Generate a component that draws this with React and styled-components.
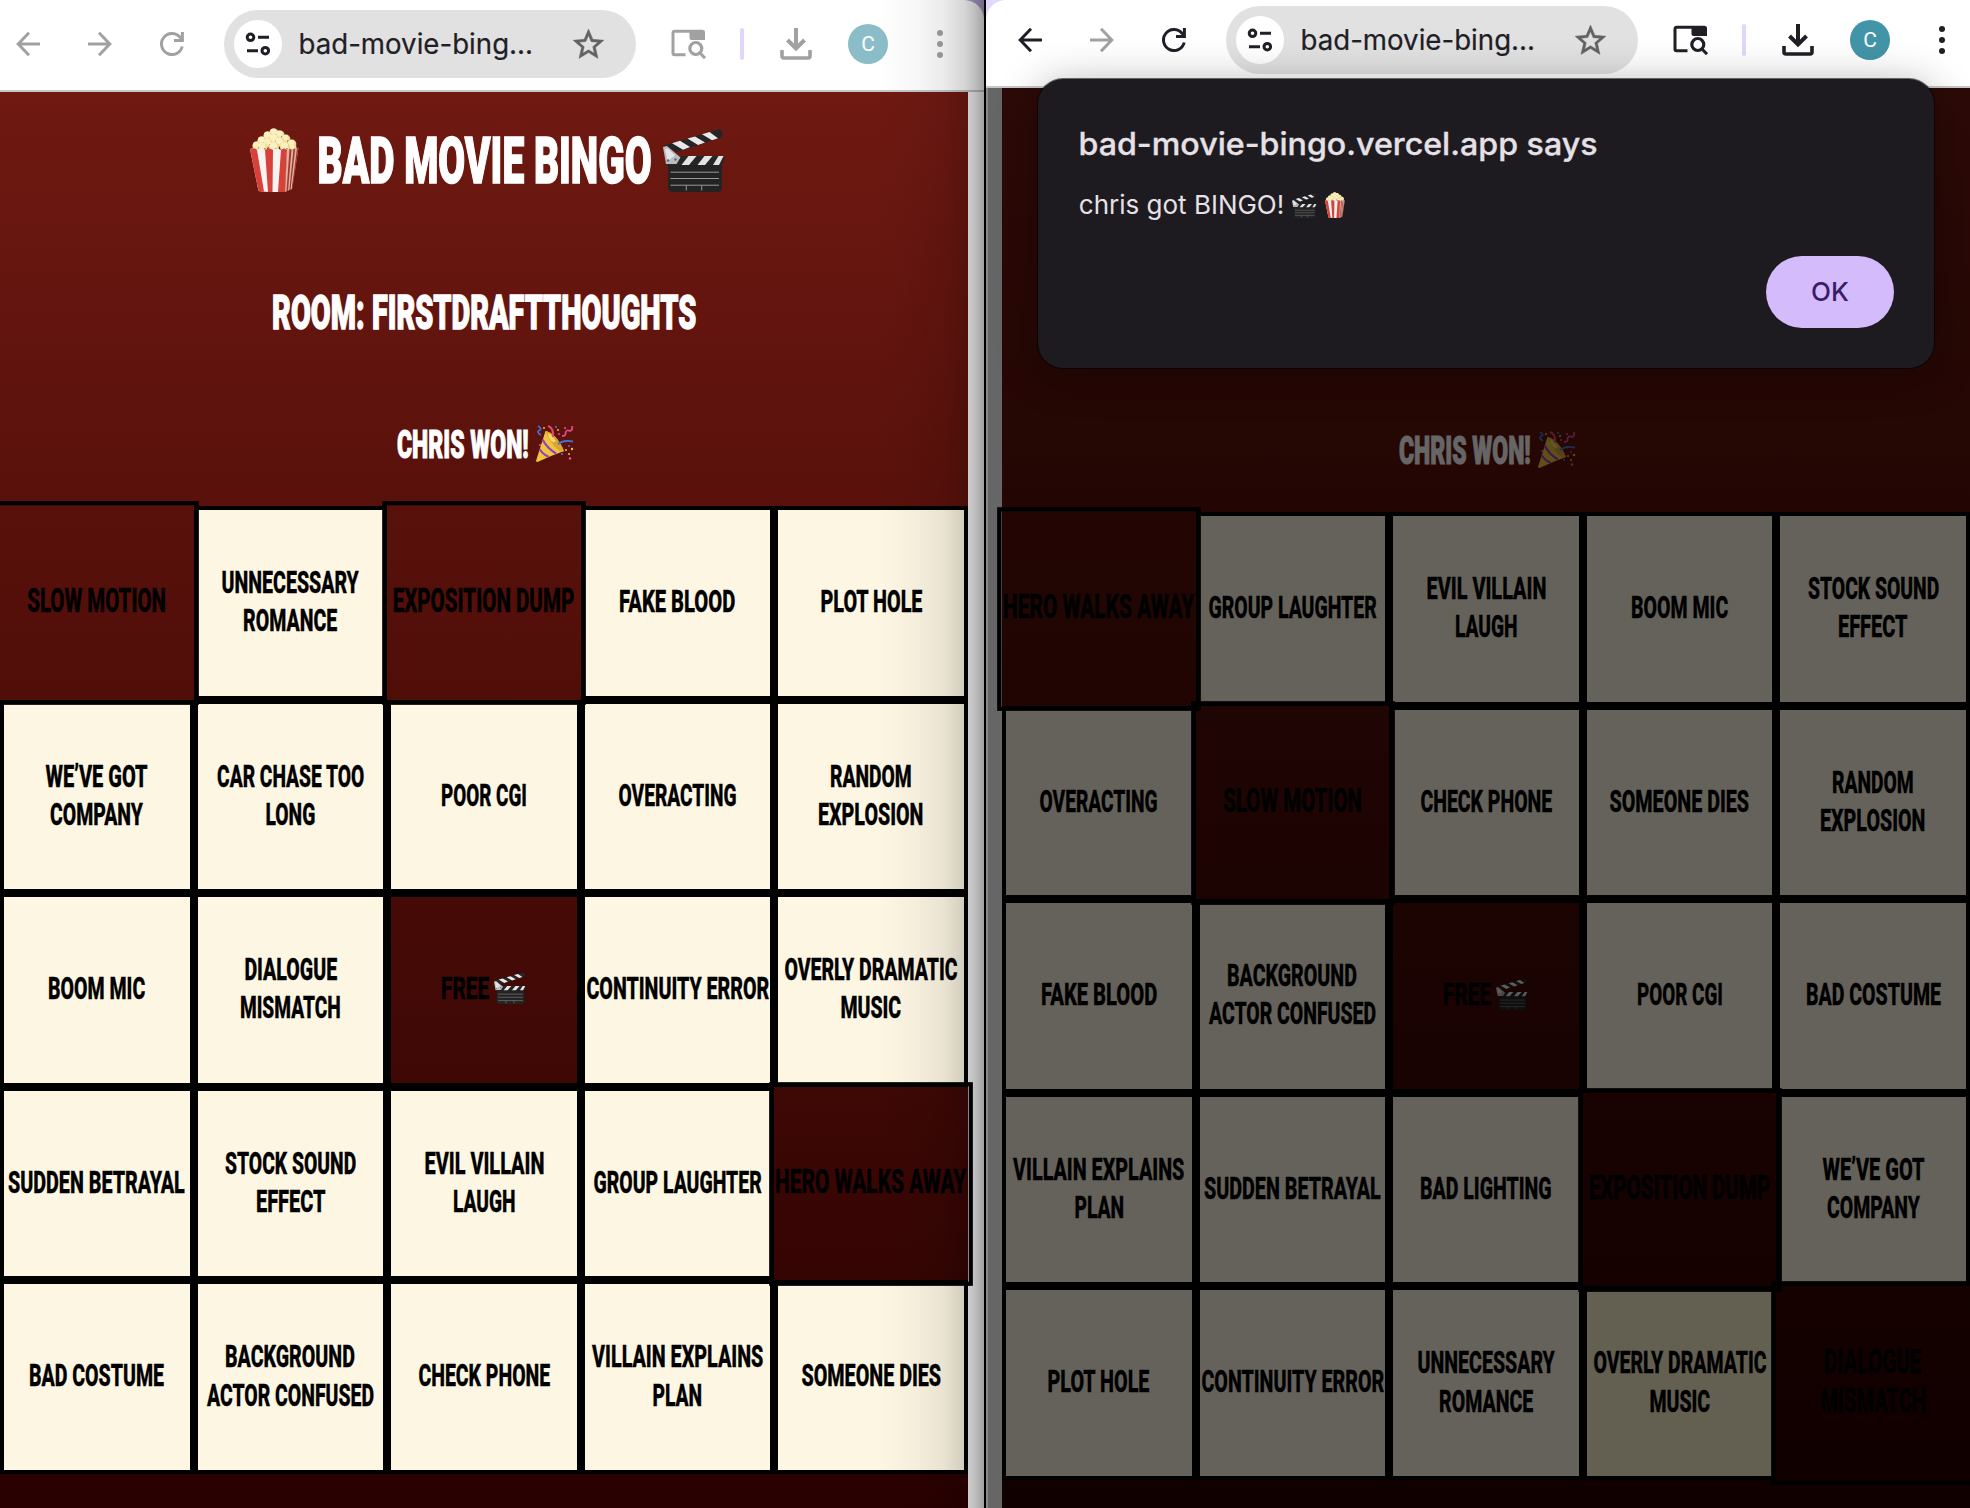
import React, { useLayoutEffect, useRef, useState } from "react";
import styled, { createGlobalStyle, css } from "styled-components";

const GlobalStyle = createGlobalStyle`
  * { box-sizing: border-box; }
  body { margin: 0; background: #000; overflow: hidden; }
`;

const DISPLAY = `"Roboto", "Liberation Sans", sans-serif`;
const SYSTEM = `"Inter", "Roboto", sans-serif`;

/* ---------- text fitted to a set width ---------- */

const FitBox = styled.span`
  display: flex;
  justify-content: center;
  width: ${(p) => p.$width}px;
  white-space: pre;
`;
const FitInner = styled.span`
  flex: none;
  display: block;
`;

function Fit({ width, children }) {
  const ref = useRef(null);
  const [scale, setScale] = useState(1);
  useLayoutEffect(() => {
    const natural = ref.current.offsetWidth;
    if (natural) setScale(width / natural);
  }, [width, children]);
  return (
    <FitBox $width={width}>
      <FitInner ref={ref} style={{ transform: `scaleX(${scale})` }}>
        {children}
      </FitInner>
    </FitBox>
  );
}

/* ---------- emoji drawings ---------- */

const KERNELS = [
  [24, 5, 4.6], [18, 8, 4.6], [30, 7, 4.6], [12, 13, 4.6], [36, 11, 4.4], [24, 11, 5],
  [7, 18, 4.6], [18, 15, 4.6], [30, 14, 4.8], [42, 16, 4.4], [13, 19, 4.6], [24, 19, 5], [35, 19, 5], [43, 20, 3.6],
];

function Popcorn({ width, height }) {
  return (
    <svg width={width} height={height} viewBox="0 0 49 64" preserveAspectRatio="none">
      {KERNELS.map(([x, y, r], i) => (
        <g key={i}>
          <circle cx={x} cy={y} r={r} fill="#eed790" />
          <circle cx={x - 0.7} cy={y - 1} r={r - 1.2} fill="#fbf0c2" />
          <circle cx={x + 1.8} cy={y + 1.8} r={0.9} fill="#bb7c2a" />
        </g>
      ))}
      <path d="M0 21 Q3.5 19 7 22 Q11 19 15 22 Q19 19 23 22 Q27 19 31 22 Q34 19 37 22 L34.5 64 Q20 64.5 8.5 63Z" fill="#f6f3f1" />
      <path d="M0 21 Q3.5 19 7 22 L14 63.6 Q10 63.5 8.500 63Z M15 22 Q19 19 23 22 L22.500 64 L18 64Z M31 22 Q34 19 37 22 L35 64 L28 64.100Z" fill="#d8403a" />
      <path d="M37 22 L48.500 20 L42 61 L35 64Z" fill="#d9b5a4" />
      <path d="M39.500 21.500 L41.500 21.200 L38 62.700 L36.500 63.300Z M43.500 20.900 L45.200 20.600 L40.500 61.700 L39.300 62.200Z M47 20.200 L48.500 20 L42.500 60.800 L41.700 61.200Z" fill="#a8352c" />
    </svg>
  );
}

function Clapper({ width, height }) {
  return (
    <svg width={width} height={height} viewBox="0 0 62 64" preserveAspectRatio="none">
      <path d="M1 17.500 L56.500 1 Q58 1 58.500 2.500 L59.500 7.500 Q59.500 9 58 9.500 L14 24Z" fill="#262626" />
      <path d="M9 15.200 L17 12.800 L27 19 L20 21.800Z M24.500 10.600 L32 8.400 L42 14.500 L35 16.900Z M39 6.200 L46.500 4 L55 10.200 L49 12.200Z" fill="#e9e9ea" />
      <path d="M2 28 H60 Q62 28.500 61 31 L59.500 37 H3Z" fill="#262626" />
      <path d="M25.500 28 H33.500 L26 37 H18.500Z M41.500 28 H49.500 L42 37 H34.500Z M55.500 28 H60.500 L56 37 H50Z" fill="#e4e4e5" />
      <path d="M0 19 L4 18 L17.500 29.500 L13.500 36 L3 36Z" fill="#b9bdc2" />
      <path d="M2 21 L5 20.500 L12 27.500 L4.500 33Z" fill="#e2e4e7" />
      <circle cx="5" cy="32.500" r="1.200" fill="#666" />
      <circle cx="12.500" cy="31.500" r="1.200" fill="#666" />
      <path d="M5 37 H59 V59 Q59 64 54 64 H10 Q5 64 5 59Z" fill="#232323" />
      <path d="M7.500 44.200 H56 M7.500 50.500 H56 M7.500 57.200 H56 M23.300 57.500 V62.500 M38.700 57.500 V62.500" stroke="#98989a" strokeWidth="1" fill="none" />
    </svg>
  );
}

function Popper({ width, height }) {
  return (
    <svg width={width} height={height} viewBox="0 0 38 38">
      <path d="M9.500 6 Q20 8 28 26 Q14 31 1.500 37 Q-.5 37 .3 35Z" fill="#f0c43d" />
      <path d="M9.500 6 Q20 8 28 26 Q25 27.500 22 25 Q13 17 9.500 6Z" fill="#dba52f" />
      <path d="M12 8 Q16 10 20 16 L17 17.500 Q12 14 12 8Z" fill="#f7d968" />
      <path d="M6.500 14.500 Q11 23 20 28.500 M3.500 24 Q7 29.500 12.500 31.800" stroke="#8d43c0" strokeWidth="2.200" fill="none" />
      <path d="M22 19 Q28 14.500 37 16.500" stroke="#3f78dc" strokeWidth="1.900" fill="none" />
      <path d="M12 1 Q18 3 17 12" stroke="#e04a6c" strokeWidth="2" fill="none" />
      <path d="M2 1 Q7 4 3 5.500 Q0 7 5 10" stroke="#3f6fe0" strokeWidth="1.700" fill="none" />
      <path d="M26 11 Q30 11 29.500 8 Q30 4 34 6 Q37 5 36 1" stroke="#d94c80" strokeWidth="1.800" fill="none" />
      <g fill="#f1bd3b">
        <circle cx="8" cy="3" r="1" /><circle cx="22" cy="5" r="1" /><circle cx="36" cy="24" r="1.200" />
        <circle cx="30" cy="25" r="1" /><circle cx="33" cy="29" r="1" />
      </g>
      <g fill="#4b7be6">
        <circle cx="20" cy="2" r="1" /><circle cx="26" cy="29" r="1" /><circle cx="33" cy="21" r=".9" />
      </g>
      <g fill="#e85a9a">
        <circle cx="29" cy="3" r="1" /><circle cx="34" cy="33.500" r="1.200" /><circle cx="4" cy="20" r="1" /><circle cx="23" cy="9" r=".9" />
      </g>
    </svg>
  );
}

/* ---------- toolbar ---------- */

const Bar = styled.header`
  display: flex;
  align-items: center;
  height: ${(p) => p.$height}px;
  padding: 0 0 ${(p) => p.$lift}px ${(p) => p.$inset}px;
  background: #fff;
  border-bottom: 2px solid #c6c8c8;
  border-radius: ${(p) => p.$corners};
`;
const Glyph = styled.span`
  display: flex;
  flex: none;
  margin-right: ${(p) => p.$gap}px;
  color: ${(p) => (p.$dim ? "#a1a1a1" : "#1f2025")};
`;
const Omnibox = styled.div`
  display: flex;
  flex: none;
  align-items: center;
  width: 412px;
  height: 68px;
  margin-right: 35px;
  padding: 0 29px 0 10px;
  border-radius: 34px;
  background: #e1e1e1;
  color: #1f2025;
  font: 400 28px/40px ${SYSTEM};
  -webkit-text-stroke: 0.2px;
`;
const SiteChip = styled.span`
  display: flex;
  align-items: center;
  justify-content: center;
  width: 48px;
  height: 48px;
  margin-right: 16px;
  border-radius: 50%;
  background: #fff;
`;
const StarSlot = styled.span`
  display: flex;
  margin-left: auto;
  color: #616264;
`;
const Divider = styled.span`
  flex: none;
  width: 4px;
  height: 32px;
  margin-right: 36px;
  border-radius: 2px;
  background: #e2d5fc;
`;
const Avatar = styled.span`
  flex: none;
  width: 40px;
  height: 40px;
  margin-right: 49px;
  border-radius: 50%;
  background: ${(p) => (p.$dim ? "#8bbdc9" : "#4295a7")};
  color: #fff;
  font: 400 21px/40px "Roboto", sans-serif;
  text-align: center;
`;

const stroke = { fill: "none", stroke: "currentColor", strokeWidth: 3 };

function Toolbar({ dim, height, lift, inset, corners }) {
  return (
    <Bar $height={height} $lift={lift} $inset={inset} $corners={corners}>
      <Glyph $gap={48} $dim={dim}>
        <svg width="24" height="24" {...stroke}><path d="M24 12H2.500M13 .8L2.200 12L13 23.200" /></svg>
      </Glyph>
      <Glyph $gap={48} $dim>
        <svg width="24" height="24" {...stroke}><path d="M0 12H21.500M11 .8L21.800 12L11 23.200" /></svg>
      </Glyph>
      <Glyph $gap={40} $dim={dim}>
        <svg width="24" height="24" {...stroke}>
          <path d="M22.200 14.500A10.500 10.500 0 1 1 20.500 5.800M22.400 0V8.500H14" />
          <path d="M22 4V9H17Z" fill="currentColor" stroke="none" />
        </svg>
      </Glyph>
      <Omnibox>
        <SiteChip>
          <svg width="26" height="24" {...stroke}>
            <circle cx="5.500" cy="5.300" r="3.300" /><path d="M13 5.300H24M2 18.700H13" /><circle cx="20.300" cy="18.700" r="3.300" />
          </svg>
        </SiteChip>
        <Fit width={235}>bad-movie-bing...</Fit>
        <StarSlot>
          <svg width="37" height="37" viewBox="0 0 24 24" fill="currentColor" stroke="currentColor" strokeWidth=".3">
            <path d="M22 9.240l-7.190-.62L12 2 9.190 8.630 2 9.240l5.460 4.730L5.820 21 12 17.270 18.180 21l-1.630-7.030L22 9.240zM12 15.400l-3.760 2.270 1-4.280-3.320-2.880 4.380-.38L12 6.100l1.710 4.040 4.380.38-3.320 2.880 1 4.280L12 15.400z" />
          </svg>
        </StarSlot>
      </Omnibox>
      <Glyph $gap={34} $dim={dim}>
        <svg width="35" height="30" viewBox="0 0 35 30" {...stroke}>
          <path d="M14.500 25.800H3.500Q2 25.800 2 24.300V4Q2 2.300 3.500 2.300H32" />
          <path d="M18.500 1H32Q34 1 34 3V11H20.500Q18.500 11 18.500 9Z" fill="currentColor" stroke="none" />
          <circle cx="24.800" cy="19.500" r="6" strokeWidth="3.200" /><path d="M29 24L34 29.200" />
        </svg>
      </Glyph>
      <Divider />
      <Glyph $gap={36} $dim={dim}>
        <svg width="32" height="32" viewBox="0 0 32 32" {...stroke} strokeWidth="4">
          <path d="M2 22V28Q2 30 4 30H28Q30 30 30 28V22" strokeWidth="3.600" />
          <path d="M16 0V20M7.500 12L16 20.500L24.500 12" />
        </svg>
      </Glyph>
      <Avatar $dim={dim}>C</Avatar>
      <Glyph $gap={0} $dim={dim}>
        <svg width="6" height="28" fill="currentColor"><circle cx="3" cy="3" r="3" /><circle cx="3" cy="14" r="3" /><circle cx="3" cy="25" r="3" /></svg>
      </Glyph>
    </Bar>
  );
}

/* ---------- bingo page ---------- */

const LINE_WIDTHS = {
  "SLOW MOTION": 132, UNNECESSARY: 137, ROMANCE: 94, "EXPOSITION DUMP": 173, "WE’VE GOT": 102, COMPANY: 93,
  "CAR CHASE TOO": 147, LONG: 50, "POOR CGI": 86, "FAKE BLOOD": 116, "PLOT HOLE": 102, OVERACTING: 118,
  RANDOM: 82, EXPLOSION: 105, "HERO WALKS AWAY": 182, "BOOM MIC": 97, "GROUP LAUGHTER": 168, "EVIL VILLAIN": 120,
  LAUGH: 63, "STOCK SOUND": 131, EFFECT: 70, "CHECK PHONE": 132, "SOMEONE DIES": 140, "VILLAIN EXPLAINS": 171,
  PLAN: 50, FREE: 48, "BAD COSTUME": 135, "BAD LIGHTING": 132, "OVERLY DRAMATIC": 173, MUSIC: 61, DIALOGUE: 93,
  MISMATCH: 101, "CONTINUITY ERROR": 183, "SUDDEN BETRAYAL": 177, BACKGROUND: 130, "ACTOR CONFUSED": 167,
};

const LEFT_BOARD = [
  "*SLOW MOTION", "UNNECESSARY|ROMANCE", "*EXPOSITION DUMP", "FAKE BLOOD", "PLOT HOLE",
  "WE’VE GOT|COMPANY", "CAR CHASE TOO|LONG", "POOR CGI", "OVERACTING", "RANDOM|EXPLOSION",
  "BOOM MIC", "DIALOGUE|MISMATCH", "FREE", "CONTINUITY ERROR", "OVERLY DRAMATIC|MUSIC",
  "SUDDEN BETRAYAL", "STOCK SOUND|EFFECT", "EVIL VILLAIN|LAUGH", "GROUP LAUGHTER", "*HERO WALKS AWAY",
  "BAD COSTUME", "BACKGROUND|ACTOR CONFUSED", "CHECK PHONE", "VILLAIN EXPLAINS|PLAN", "SOMEONE DIES",
];
const RIGHT_BOARD = [
  "*HERO WALKS AWAY", "GROUP LAUGHTER", "EVIL VILLAIN|LAUGH", "BOOM MIC", "STOCK SOUND|EFFECT",
  "OVERACTING", "*SLOW MOTION", "CHECK PHONE", "SOMEONE DIES", "RANDOM|EXPLOSION",
  "FAKE BLOOD", "BACKGROUND|ACTOR CONFUSED", "FREE", "POOR CGI", "BAD COSTUME",
  "VILLAIN EXPLAINS|PLAN", "SUDDEN BETRAYAL", "BAD LIGHTING", "*EXPOSITION DUMP", "WE’VE GOT|COMPANY",
  "PLOT HOLE", "CONTINUITY ERROR", "UNNECESSARY|ROMANCE", "~OVERLY DRAMATIC|MUSIC", "*DIALOGUE|MISMATCH",
];

const Page = styled.main`
  flex: none;
  width: 968px;
  padding-top: ${(p) => p.$top}px;
  background: linear-gradient(#6f1912, #5a110b 28%, #3e0805 70%, #290000);
  color: #fff;
  font-family: ${DISPLAY};
  font-weight: 900;
`;
const Title = styled.h1`
  display: flex;
  align-items: center;
  justify-content: center;
  height: 138px;
  margin: 0;
  padding: 0 0 2px 6px;
  gap: 11px;
  font-size: 65px;
  font-weight: 900;
  line-height: 76px;
  -webkit-text-stroke: 1.6px;
  ${FitBox} { margin: 2px 0 0 8px; }
`;
const Room = styled.h2`
  display: flex;
  align-items: center;
  justify-content: center;
  height: 164px;
  margin: 0;
  padding: 2px 0 0 1px;
  font-size: 49px;
  font-weight: 900;
  line-height: 58px;
  -webkit-text-stroke: 1.4px;
`;
const Winner = styled.h3`
  display: flex;
  align-items: center;
  justify-content: center;
  gap: 7px;
  height: 100px;
  margin: 0 0 12px;
  padding-left: 2px;
  font-size: 38px;
  font-weight: 900;
  line-height: 46px;
  -webkit-text-stroke: 1px;
  ${FitBox} { margin-top: 1px; }
`;
const Grid = styled.section`
  display: grid;
  grid-template-columns: repeat(5, 193.6px);
  grid-auto-rows: 193.6px;
`;
const Cell = styled.button`
  display: flex;
  flex-direction: column;
  align-items: center;
  justify-content: center;
  margin: 0;
  padding: 0 0 3px;
  border: 4px solid #000;
  border-radius: 0;
  background: ${(p) => (p.$hot ? "#f8eecb" : "#fdf6e3")};
  color: #000;
  font: 800 32px/38.4px ${DISPLAY};
  -webkit-text-stroke: 0.4px;
  ${(p) => p.$open && css`background: transparent;`}
  ${(p) => p.$marked && css`transform: scale(1.05);`}
`;
const CellLine = styled.span`
  display: flex;
  align-items: center;
  gap: 5px;
  height: 38.4px;
`;

function Board({ squares }) {
  return (
    <Grid>
      {squares.map((raw) => {
        const marked = raw[0] === "*";
        const hot = raw[0] === "~";
        const text = raw.replace(/^[*~]/, "");
        const free = text === "FREE";
        return (
          <Cell key={text} $marked={marked} $hot={hot} $open={marked || free}>
            {text.split("|").map((line) => (
              <CellLine key={line}>
                <Fit width={LINE_WIDTHS[line]}>{line}</Fit>
                {free && <Clapper width={32} height={32} />}
              </CellLine>
            ))}
          </Cell>
        );
      })}
    </Grid>
  );
}

function WinnerLine() {
  return (
    <Winner>
      <Fit width={132}>CHRIS WON!</Fit>
      <Popper width={38} height={38} />
    </Winner>
  );
}

/* ---------- windows ---------- */

const Desktop = styled.div`
  display: flex;
  gap: 2px;
  width: 1970px;
  height: 1508px;
  overflow: hidden;
  background: linear-gradient(90deg, #b4a3d4 984px, #000 984px, #000 986px, #e2d6fb 986px);
`;
const Window = styled.div`
  position: relative;
  display: flex;
  flex-direction: column;
  width: 984px;
  height: 1508px;
  overflow: hidden;
`;
const Viewport = styled.div`
  position: relative;
  display: flex;
  flex: 1;
  padding-left: ${(p) => p.$gutter}px;
  background: #fff;
`;
const NeighbourShade = styled.div`
  position: absolute;
  inset: 0 0 0 auto;
  width: 106px;
  pointer-events: none;
  background: linear-gradient(90deg, rgba(0,0,0,0), rgba(0,0,0,.03) 35%, rgba(0,0,0,.08) 62%, rgba(0,0,0,.17) 82%, rgba(0,0,0,.24) 90%, rgba(0,0,0,.36));
`;
const Scrim = styled.div`
  position: absolute;
  inset: 0;
  background: rgba(0, 0, 0, 0.6);
  border-left: 2px solid #8a8a8a;
`;
const Dialog = styled.div`
  position: absolute;
  top: 79px;
  left: 52px;
  width: 896px;
  height: 289px;
  padding: 42px 40px 40px 40px;
  display: flex;
  flex-direction: column;
  border-radius: 25px;
  background: #1e1b20;
  color: #e6e1e6;
  box-shadow: 0 0 0 1px rgba(0,0,0,.55), 0 6px 44px rgba(0,0,0,.32);
  font-family: ${SYSTEM};
`;
const DialogTitle = styled.div`
  display: flex;
  height: 46px;
  font-size: 31px;
  font-weight: 500;
  line-height: 46px;
  padding-left: 1px;
  -webkit-text-stroke: 0.3px;
`;
const DialogText = styled.div`
  display: flex;
  align-items: center;
  gap: 8px;
  height: 36px;
  margin-top: 20px;
  padding-left: 1px;
  font-size: 26px;
  line-height: 36px;
`;
const OkButton = styled.button`
  align-self: flex-end;
  display: flex;
  align-items: center;
  justify-content: center;
  width: 128px;
  height: 72px;
  margin-top: 33px;
  padding: 0;
  border: 0;
  border-radius: 36px;
  background: #d4bbfc;
  color: #3a1d66;
  font: 500 26px/36px ${SYSTEM};
`;

export default function App() {
  return (
    <>
      <GlobalStyle />
      <Desktop>
        <Window>
          <Toolbar dim height={92} lift={2} inset={16} corners="0 20px 0 0" />
          <Viewport $gutter={0}>
            <Page $top={0}>
              <Title>
                <Popcorn width={49} height={64} />
                <Fit width={334}>BAD MOVIE BINGO</Fit>
                <Clapper width={62} height={64} />
              </Title>
              <Room><Fit width={424}>ROOM: FIRSTDRAFTTHOUGHTS</Fit></Room>
              <WinnerLine />
              <Board squares={LEFT_BOARD} />
            </Page>
          </Viewport>
          <NeighbourShade />
        </Window>
        <Window>
          <Toolbar height={88} lift={6} inset={32} corners="20px 0 0 0" />
          <Viewport $gutter={16}>
            <Page $top={312}>
              <WinnerLine />
              <Board squares={RIGHT_BOARD} />
            </Page>
            <Scrim />
          </Viewport>
          <Dialog>
            <DialogTitle><Fit width={519}>bad-movie-bingo.vercel.app says</Fit></DialogTitle>
            <DialogText>
              <Fit width={205}>chris got BINGO!</Fit>
              <Clapper width={25} height={25} />
              <Popcorn width={20} height={26} />
            </DialogText>
            <OkButton><Fit width={38}>OK</Fit></OkButton>
          </Dialog>
        </Window>
      </Desktop>
    </>
  );
}
